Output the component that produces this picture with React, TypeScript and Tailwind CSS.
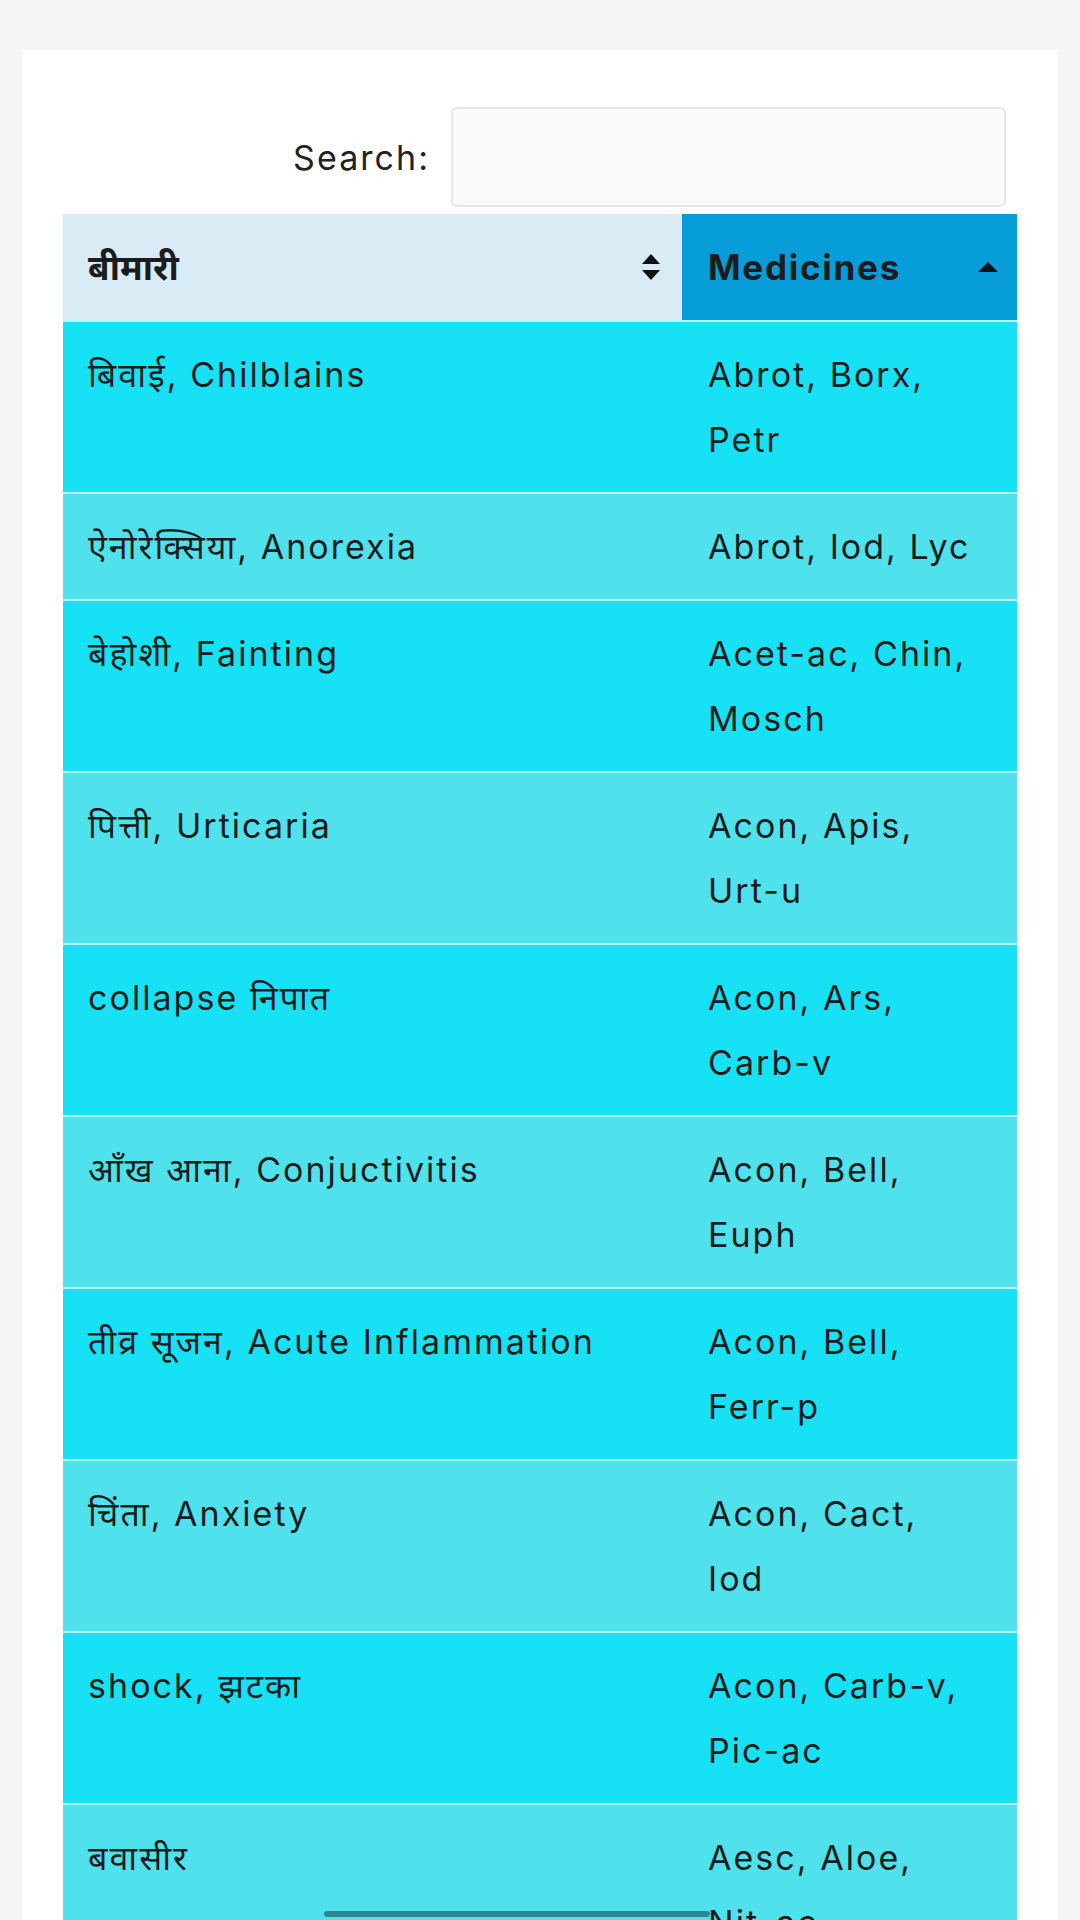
import React from 'react';

// Disease / medicine rows, in the order shown (medicine lines broken as on the page)
const rows: [string, string[]][] = [
  ['बिवाई, Chilblains', ['Abrot, Borx,', 'Petr']],
  ['ऐनोरेक्सिया, Anorexia', ['Abrot, Iod, Lyc']],
  ['बेहोशी, Fainting', ['Acet-ac, Chin,', 'Mosch']],
  ['पित्ती, Urticaria', ['Acon, Apis,', 'Urt-u']],
  ['collapse निपात', ['Acon, Ars,', 'Carb-v']],
  ['आँख आना, Conjuctivitis', ['Acon, Bell,', 'Euph']],
  ['तीव्र सूजन, Acute Inflammation', ['Acon, Bell,', 'Ferr-p']],
  ['चिंता, Anxiety', ['Acon, Cact,', 'Iod']],
  ['shock, झटका', ['Acon, Carb-v,', 'Pic-ac']],
  ['बवासीर', ['Aesc, Aloe,', 'Nit-ac']],
  ['दमा, Asthma', ['Ambr, Ars,', 'Ip']],
];

function SortBoth() {
  return (
    <svg width="22" height="30" viewBox="0 0 22 30" className="shrink-0">
      <path d="M11 2 L20 12 H2 Z" fill="#111" />
      <path d="M11 28 L20 18 H2 Z" fill="#111" />
    </svg>
  );
}

function SortAsc() {
  return (
    <svg width="24" height="14" viewBox="0 0 24 14" className="shrink-0">
      <path d="M12 2 L22 12 H2 Z" fill="#111" />
    </svg>
  );
}

export default function App() {
  return (
    <div
      className="min-h-[1920px] bg-[#f4f4f4] pt-[50px] overflow-hidden relative"
      style={{ fontFamily: "Inter, 'Noto Sans', 'Noto Sans Devanagari', sans-serif" }}
    >
      <div className="mx-[22px] bg-white pt-[57px] px-[41px] pb-10 min-h-[1900px]">
        {/* Search */}
        <div className="flex items-center justify-end pr-[11px] gap-[21px]">
          <label className="text-[34px] tracking-[0.06em] text-[#222]">Search:</label>
          <div className="w-[555px] h-[100px] bg-[#fafafa] border-2 border-[#e6e6e6] rounded-[6px]" />
        </div>

        {/* Table */}
        <table className="mt-[7px] w-full border-collapse text-[#1c1c1c] table-fixed">
          <colgroup>
            <col className="w-[619px]" />
            <col />
          </colgroup>
          <thead>
            <tr>
              <th className="bg-[#d9ebf5] h-[107px] pl-[25px] pr-[20px] text-left">
                <div className="flex items-center justify-between">
                  <span className="text-[35px] font-bold">बीमारी</span>
                  <SortBoth />
                </div>
              </th>
              <th className="bg-[#069dd8] h-[107px] pl-[26px] pr-[17px] text-left">
                <div className="flex items-center justify-between">
                  <span className="text-[35px] font-bold tracking-[0.05em]">Medicines</span>
                  <SortAsc />
                </div>
              </th>
            </tr>
          </thead>
          <tbody>
            {rows.map(([disease, meds], i) => (
              <tr
                key={i}
                className={`border-t-2 border-[#b9f2f8] ${i % 2 === 0 ? 'bg-[#17e1f4]' : 'bg-[#4fe2ec]'}`}
              >
                <td className="align-top whitespace-nowrap pl-[25px] pr-[10px] py-[20px] text-[34px] leading-[65px] tracking-[0.06em]">
                  {disease}
                </td>
                <td className="align-top whitespace-nowrap pl-[26px] pr-[10px] py-[20px] text-[34px] leading-[65px] tracking-[0.06em]">
                  {meds.map((line, j) => (
                    <div key={j}>{line}</div>
                  ))}
                </td>
              </tr>
            ))}
          </tbody>
        </table>
      </div>

      {/* horizontal scroll thumb */}
      <div className="absolute left-[324px] top-[1911px] w-[386px] h-[6px] rounded-full bg-black/40" />
    </div>
  );
}
